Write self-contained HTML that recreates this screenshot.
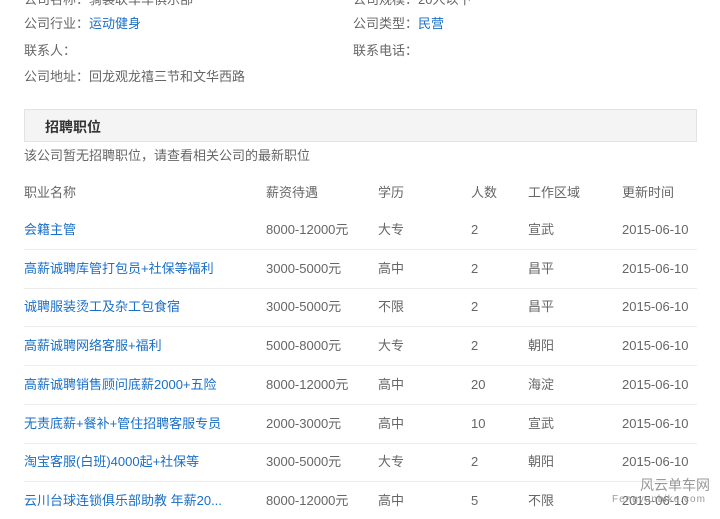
<!DOCTYPE html><html><head><meta charset="utf-8"><style>
body{margin:0;width:720px;height:519px;overflow:hidden;background:#fff;font-family:"Liberation Sans","Noto Sans CJK SC",sans-serif;font-size:13px;color:#666;position:relative}
.a{position:absolute;white-space:nowrap;line-height:16px}
a{color:#1a6fc8;text-decoration:none}
.hd{position:absolute;left:24px;top:109px;width:671px;height:31px;background:#f4f4f4;border:1px solid #e3e3e3}
.hd b{position:absolute;left:20px;top:7px;color:#333;font-size:14px}
.ln{position:absolute;left:24px;width:673px;height:1px;background:#ececec}
</style></head><body>
<div class="a" style="left:24px;top:-8px">公司名称：骑装联车车俱乐部</div>
<div class="a" style="left:353px;top:-8px">公司规模：20人以下</div>
<div class="a" style="left:24px;top:16px">公司行业：<a>运动健身</a></div>
<div class="a" style="left:353px;top:16px">公司类型：<a>民营</a></div>
<div class="a" style="left:24px;top:43px">联系人：</div>
<div class="a" style="left:353px;top:43px">联系电话：</div>
<div class="a" style="left:24px;top:69px">公司地址：回龙观龙禧三节和文华西路</div>
<div class="hd"><b>招聘职位</b></div>
<div class="a" style="left:24px;top:148px">该公司暂无招聘职位，请查看相关公司的最新职位</div>
<div class="a" style="left:24px;top:185px">职业名称</div><div class="a" style="left:266px;top:185px">薪资待遇</div><div class="a" style="left:378px;top:185px">学历</div><div class="a" style="left:471px;top:185px">人数</div><div class="a" style="left:528px;top:185px">工作区域</div><div class="a" style="left:622px;top:185px">更新时间</div>
<div id="rows"></div>
<div class="a" style="left:640px;top:477px;font-size:14px;color:#999">风云单车网</div>
<div class="a" style="left:612px;top:492px;font-size:10px;color:#999;letter-spacing:1px">Fengyunbike.com</div>
<script>
var r=[["会籍主管","8000-12000元","大专","2","宣武"],["高薪诚聘库管打包员+社保等福利","3000-5000元","高中","2","昌平"],["诚聘服装烫工及杂工包食宿","3000-5000元","不限","2","昌平"],["高薪诚聘网络客服+福利","5000-8000元","大专","2","朝阳"],["高薪诚聘销售顾问底薪2000+五险","8000-12000元","高中","20","海淀"],["无责底薪+餐补+管住招聘客服专员","2000-3000元","高中","10","宣武"],["淘宝客服(白班)4000起+社保等","3000-5000元","大专","2","朝阳"],["云川台球连锁俱乐部助教 年薪20...","8000-12000元","高中","5","不限"]];
var h="";r.forEach(function(x,i){var y=222+i*38.7;
h+='<div class="a" style="left:24px;top:'+y+'px"><a>'+x[0]+'</a></div><div class="a" style="left:266px;top:'+y+'px">'+x[1]+'</div><div class="a" style="left:378px;top:'+y+'px">'+x[2]+'</div><div class="a" style="left:471px;top:'+y+'px">'+x[3]+'</div><div class="a" style="left:528px;top:'+y+'px">'+x[4]+'</div><div class="a" style="left:622px;top:'+y+'px">2015-06-10</div>';
if(i<7)h+='<div class="ln" style="top:'+(y+27)+'px"></div>';});
document.getElementById("rows").innerHTML=h;
</script>
</body></html>
